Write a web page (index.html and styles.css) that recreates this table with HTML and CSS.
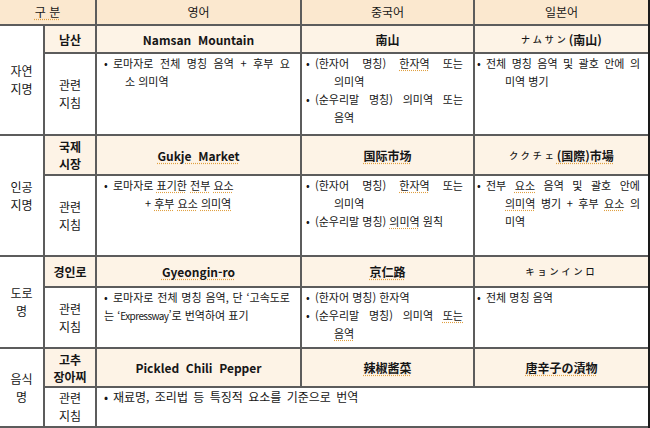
FILE: index.html
```html
<!DOCTYPE html>
<html lang="ko">
<head>
<meta charset="utf-8">
<link rel="stylesheet" href="styles.css">
</head>
<body>
<div class="tbl">
  <div class="c hd span2"><span class="sq">구 분</span></div>
  <div class="c hd">영어</div>
  <div class="c hd">중국어</div>
  <div class="c hd">일본어</div>

  <div class="c grp r2">자연<br>지명</div>
  <div class="c nm b">남산</div>
  <div class="c nm b">Namsan&nbsp; Mountain</div>
  <div class="c nm b">南山</div>
  <div class="c nm"><span class="kana">ナムサン</span><b>(南山)</b></div>

  <div class="c lbl">관련<br>지침</div>
  <div class="g g3">
    <span class="ln j"><span class="bu">•</span>로마자로 전체 명칭 음역 + 후부 요</span>
    <span class="ln" style="padding-left:21px">소 의미역</span>
  </div>
  <div class="g g4">
    <span class="ln j"><span class="bu">•</span>(한자어 명칭) <span class="sq">한자역</span> 또는</span>
    <span class="ln i4">의미역</span>
    <span class="ln j"><span class="bu">•</span>(순우리말 명칭) 의미역 또는</span>
    <span class="ln i4">음역</span>
  </div>
  <div class="g g5">
    <span class="ln j"><span class="bu">•</span>전체 명칭 음역 및 괄호 안에 의</span>
    <span class="ln i5">미역 병기</span>
  </div>

  <div class="c grp r2">인공<br>지명</div>
  <div class="c nm b">국제<br>시장</div>
  <div class="c nm b"><span class="sq">Gukje&nbsp; Market</span></div>
  <div class="c nm b"><span class="sq">国际市场</span></div>
  <div class="c nm"><span class="kana">ククチェ</span><b class="sq">(国際)市場</b></div>

  <div class="c lbl">관련<br>지침</div>
  <div class="g g3">
    <span class="ln"><span class="bu">•</span>로마자로 <span class="sq">표기한</span> <span class="sq">전부</span> <span class="sq">요소</span></span>
    <span class="ln" style="padding-left:41px">+ <span class="sq">후부</span> <span class="sq">요소</span> <span class="sq">의미역</span></span>
  </div>
  <div class="g g4">
    <span class="ln j"><span class="bu">•</span>(한자어 명칭) <span class="sq">한자역</span> 또는</span>
    <span class="ln i4">의미역</span>
    <span class="ln"><span class="bu">•</span>(순우리말 명칭) <span class="sq">의미역</span> 원칙</span>
  </div>
  <div class="g g5">
    <span class="ln j"><span class="bu">•</span>전부 <span class="sq">요소</span> 음역 및 괄호 안에</span>
    <span class="ln j i5"><span class="sq">의미역</span> 병기 + 후부 <span class="sq">요소</span> 의</span>
    <span class="ln i5">미역</span>
  </div>

  <div class="c grp r2">도로<br>명</div>
  <div class="c nm b">경인로</div>
  <div class="c nm b"><span class="sq">Gyeongin-ro</span></div>
  <div class="c nm b"><span class="sq">京仁路</span></div>
  <div class="c nm"><span class="kana">キョンインロ</span></div>

  <div class="c lbl">관련<br>지침</div>
  <div class="g g3">
    <span class="ln j"><span class="bu">•</span>로마자로 전체 명칭 음역, 단 ‘고속도로</span>
    <span class="ln">는 ‘<span class="cond">Expressway</span>’로 번역하여 표기</span>
  </div>
  <div class="g g4">
    <span class="ln"><span class="bu">•</span>(한자어 명칭) 한자역</span>
    <span class="ln j"><span class="bu">•</span>(순우리말 명칭) 의미역 <span class="sq">또는</span></span>
    <span class="ln i4"><span class="sq">음역</span></span>
  </div>
  <div class="g g5">
    <span class="ln"><span class="bu">•</span>전체 명칭 음역</span>
  </div>

  <div class="c grp r2">음식<br>명</div>
  <div class="c nm b">고추<br>장아찌</div>
  <div class="c nm b">Pickled&nbsp; Chili&nbsp; Pepper</div>
  <div class="c nm b"><span class="sq">辣椒酱菜</span></div>
  <div class="c nm b"><span class="sq">唐辛子の漬物</span></div>

  <div class="c lbl">관련<br>지침</div>
  <div class="g g3 span3">
    <span class="ln wide"><span class="bu">•</span>재료명, 조리법 등 특징적 요소를 기준으로 번역</span>
  </div>
</div>
</body>
</html>
```

FILE: styles.css
```css
html, body {
  margin: 0;
  padding: 0;
  background: #fff;
}

body {
  font-family: "Noto Sans CJK KR", "Noto Sans", sans-serif;
  font-size: 11px;
  color: #161616;
}

.tbl {
  display: grid;
  grid-template-columns: 43px 50px 203px 171px 173px;
  grid-template-rows: 24px 26px 80px 38px 79px 29px 59px 37px 38px;
  gap: 2px;
  width: 650px;
  height: 428px;
  padding-bottom: 2px;
  box-sizing: border-box;
  background: #5c5c5c;
  border-right: 2px solid #1a1a1a;
}

.c {
  background: #fff;
  display: flex;
  align-items: center;
  justify-content: center;
  text-align: center;
  line-height: 18px;
}

.hd {
  background: #fbe8cf;
  font-size: 12px;
}

.nm {
  background: #fdf3e6;
  font-size: 12px;
  line-height: 17px;
}

.b,
.nm b {
  font-weight: bold;
}

.grp,
.lbl {
  font-size: 12px;
}

.span2 { grid-column: span 2; }
.span3 { grid-column: span 3; }
.r2 { grid-row: span 2; }

.kana {
  font-family: "Noto Sans CJK JP", sans-serif;
  font-size: 9px;
  letter-spacing: 3px;
  font-weight: 500;
}

.g {
  background: #fff;
  display: flex;
  flex-direction: column;
  align-items: stretch;
  line-height: 18px;
  text-align: left;
}

.g3 { padding: 0 10px 0 7px; }
.g4 { padding: 0 10px 0 4px; }
.g5 { padding: 0 8px 0 2px; }

.ln {
  display: block;
  white-space: nowrap;
}

.j {
  text-align: justify;
  text-align-last: justify;
}

.wide {
  font-size: 12px;
  word-spacing: 2px;
}

.bu {
  display: inline-block;
  width: 9px;
}

.i4 { padding-left: 28px; }
.i5 { padding-left: 28px; }

.cond {
  font-size: 10px;
  letter-spacing: -0.6px;
}

.sq {
  text-decoration: underline dotted #e0a040;
  text-underline-offset: 2px;
}
```
